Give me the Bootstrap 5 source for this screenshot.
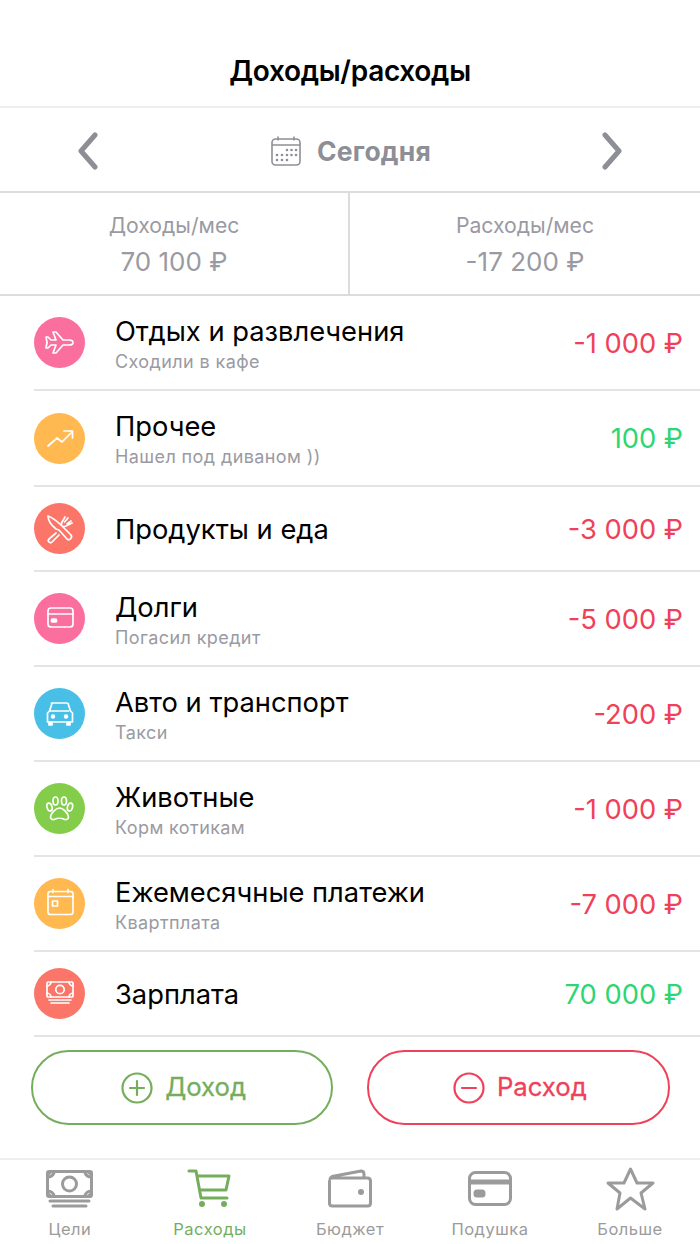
<!DOCTYPE html>
<html lang="ru"><head><meta charset="utf-8"><title>Доходы/расходы</title>
<link href="https://cdn.jsdelivr.net/npm/bootstrap@5.3.0/dist/css/bootstrap.min.css" rel="stylesheet">
<style>
html,body{height:1244px;overflow:hidden;background:#fff}
body{font-family:Inter,"Noto Sans",sans-serif;color:#000;width:700px}
.app{height:1244px}
.topbar{height:108px;padding-top:49px;border-bottom:2px solid #eee;font-size:28px;font-weight:600;line-height:44px;letter-spacing:-.3px}
.datebar{height:85px;border-bottom:2px solid #dcdcde;padding:3px 77px 0;color:#8e8e96}
.dategroup{gap:16px;margin-left:2px}
.datetext{font-size:26.5px;font-weight:700;line-height:1;letter-spacing:.2px}
.stats{height:103px;border-bottom:2px solid #dcdcde;color:#9a9aa2}
.statcell{flex:0 0 50%;padding-top:19px;text-align:center}
.statcell:first-child{border-right:2px solid #dcdcde}
.statlabel{font-size:21.2px;line-height:26px}
.statval{font-size:26px;line-height:36px;margin-top:6px}
.txrow{margin-left:34px;padding-right:17px;border-bottom:2px solid #e4e4e6}
.txtall{height:95px}.txshort{height:85px}.txtaller{height:96px}
.disc{width:51px;height:51px;border-radius:50%;flex:none;margin-right:30px}
.disc svg{width:51px;height:51px;fill:none;stroke:#fff;stroke-width:1.7;stroke-linecap:round;stroke-linejoin:round;display:block}
.txbody{padding-top:2px}
.txname{font-size:27.3px;line-height:34px}
.txnote{font-size:18px;line-height:22px;color:#9a9aa2;letter-spacing:.4px;margin-top:2px}
.txamt{font-size:27.3px;line-height:1;padding-top:2px}
.neg{color:#f0405a}.pos{color:#2ed573}
.actions{padding:13px 30.5px 0 31px;gap:34px;height:121px}
.pill{flex:1 1 0;height:75px;border-radius:38px;background:#fff;border:2px solid;font-size:25.7px;font-weight:400;gap:12px;padding-left:9px;-webkit-text-stroke:.3px currentColor}
.pill svg{width:32px;height:32px;fill:none;stroke:currentColor;stroke-width:2.2;stroke-linecap:round}
.pillgreen{border-color:#74ae5c;color:#74ae5c}
.pillred{border-color:#f0405a;color:#f0405a}
.tabs{border-top:2px solid #eee;height:85px}
.tabitem{flex:1 1 0;text-align:center;color:#9b9b9b;padding-top:8px}
.tabitem svg{display:block;margin:0 auto;width:50px;height:48px;fill:none;stroke:#9b9b9b;stroke-width:3;stroke-linejoin:round;stroke-linecap:round;overflow:visible}
.tabitem span{display:block;font-size:16.5px;line-height:20px;margin-top:3px;letter-spacing:.5px}
.tabon{color:#74ae5c}.tabitem.tabon svg{stroke:#74ae5c}
</style></head><body>
<div class="app d-flex flex-column">
<div class="topbar text-center">Доходы/расходы</div>
<div class="datebar d-flex align-items-center justify-content-between">
<svg width="22" height="38" viewBox="0 0 22 38" fill="none" stroke="#8e8e96" stroke-width="5" stroke-linecap="round" stroke-linejoin="round"><path d="M18 3 4 19l14 16"/></svg>
<div class="dategroup d-flex align-items-center">
<svg width="30" height="30" viewBox="0 0 30 30" fill="none" stroke="#8e8e96" stroke-width="1.6"><rect x="1" y="3" width="28" height="26" rx="3.5"/><path d="M1 9h28M7 .5v4M23 .5v4"/><g fill="#8e8e96" stroke="none"><circle cx="16" cy="14" r="1.3"/><circle cx="20.500" cy="14" r="1.3"/><circle cx="25" cy="14" r="1.3"/><circle cx="6" cy="19" r="1.3"/><circle cx="11" cy="19" r="1.3"/><circle cx="16" cy="19" r="1.3"/><circle cx="20.500" cy="19" r="1.3"/><circle cx="25" cy="19" r="1.3"/><circle cx="6" cy="24" r="1.3"/><circle cx="11" cy="24" r="1.3"/><circle cx="16" cy="24" r="1.3"/></g></svg>
<span class="datetext">Сегодня</span></div>
<svg width="22" height="38" viewBox="0 0 22 38" fill="none" stroke="#8e8e96" stroke-width="5" stroke-linecap="round" stroke-linejoin="round"><path d="m4 3 14 16L4 35"/></svg>
</div>
<div class="stats d-flex">
<div class="statcell"><div class="statlabel">Доходы/мес</div><div class="statval">70 100 ₽</div></div>
<div class="statcell"><div class="statlabel">Расходы/мес</div><div class="statval">-17 200 ₽</div></div>
</div>

<div class="txrow txtall d-flex align-items-center">
<div class="disc" style="background:#fb6f9f"><svg viewBox="0 0 51 51"><path d="M39 25.500c0-1.500-2-2.500-4-2.500h-6l-7-8h-3l3 8h-5l-3-3h-2l1 5.500-1 5.500h2l3-3h5l-3 8h3l7-8h6c2 0 4-1 4-2.500z"/></svg></div>
<div class="txbody flex-grow-1"><div class="txname">Отдых и развлечения</div><div class="txnote">Сходили в кафе</div></div>
<div class="txamt neg">-1 000 ₽</div></div>

<div class="txrow txtaller d-flex align-items-center">
<div class="disc" style="background:#ffb950"><svg viewBox="0 0 51 51"><path d="M14 33l9-8 5 4 10-10M30 18h8.500v7"/></svg></div>
<div class="txbody flex-grow-1"><div class="txname">Прочее</div><div class="txnote">Нашел под диваном ))</div></div>
<div class="txamt pos">100 ₽</div></div>

<div class="txrow txshort d-flex align-items-center">
<div class="disc" style="background:#fb7568"><svg viewBox="0 0 51 51"><path d="M14 13c0 5 3 9 8 13l3 1 8 9c2 2 6-1 4-4l-9-9c-4-4-9-8-14-10zM31 14l-3 5c-1 2-1 3 0 4s2 1 4 0l6-3M34 15l-3.500 4M37 18l-4 3M22 30l-7 6c-2 2 1 5 3 3l7-7"/></svg></div>
<div class="txbody flex-grow-1"><div class="txname">Продукты и еда</div></div>
<div class="txamt neg">-3 000 ₽</div></div>

<div class="txrow txtall d-flex align-items-center">
<div class="disc" style="background:#fb6f9f"><svg viewBox="0 0 51 51"><rect x="14" y="15" width="25" height="19" rx="3"/><path d="M14 21h25"/><rect x="17.500" y="26" width="5" height="3" rx="1" fill="#fff"/></svg></div>
<div class="txbody flex-grow-1"><div class="txname">Долги</div><div class="txnote">Погасил кредит</div></div>
<div class="txamt neg">-5 000 ₽</div></div>

<div class="txrow txtall d-flex align-items-center">
<div class="disc" style="background:#47bfe6"><svg viewBox="0 0 51 51"><path d="M18 15h15c1 0 2 1 2 2l2 6 2 2v9H14v-9l2-2 2-6c0-1 1-2 2-2zM16 23h19" transform="translate(-.5 0)"/><path d="M15 34v3h3v-3M33 34v3h3v-3" fill="#fff"/><circle cx="19" cy="28.500" r="1.400" fill="#fff"/><circle cx="32" cy="28.500" r="1.400" fill="#fff"/></svg></div>
<div class="txbody flex-grow-1"><div class="txname">Авто и транспорт</div><div class="txnote">Такси</div></div>
<div class="txamt neg">-200 ₽</div></div>

<div class="txrow txtall d-flex align-items-center">
<div class="disc" style="background:#84cd4b"><svg viewBox="0 0 51 51"><ellipse cx="15.500" cy="24" rx="2.500" ry="4" transform="rotate(-15 15.500 24)"/><ellipse cx="21.500" cy="18" rx="2.500" ry="4"/><ellipse cx="30" cy="18" rx="2.500" ry="4"/><ellipse cx="36" cy="24" rx="2.500" ry="4" transform="rotate(15 36 24)"/><path d="M25.500 25c-4 0-9 6-9 9 0 3 3 3 5 2s6-1 8 0 5 1 5-2c0-3-5-9-9-9z"/></svg></div>
<div class="txbody flex-grow-1"><div class="txname">Животные</div><div class="txnote">Корм котикам</div></div>
<div class="txamt neg">-1 000 ₽</div></div>

<div class="txrow txtall d-flex align-items-center">
<div class="disc" style="background:#ffb950"><svg viewBox="0 0 51 51"><rect x="14" y="13.500" width="25" height="23" rx="2.500"/><path d="M14 18.500h25M19 11.500v3M34 11.500v3M18.500 23h5v5h-5z"/></svg></div>
<div class="txbody flex-grow-1"><div class="txname">Ежемесячные платежи</div><div class="txnote">Квартплата</div></div>
<div class="txamt neg">-7 000 ₽</div></div>

<div class="txrow txshort d-flex align-items-center">
<div class="disc" style="background:#fb7568"><svg viewBox="0 0 51 51"><rect x="13" y="14" width="26" height="15" rx="1"/><circle cx="26" cy="21.500" r="4.200"/><path d="M13 18c2 0 4-2 4-4M39 18c-2 0-4-2-4-4M13 25c2 0 4 2 4 4M39 25c-2 0-4 2-4 4M15 32h22M17 35h18"/></svg></div>
<div class="txbody flex-grow-1"><div class="txname">Зарплата</div></div>
<div class="txamt pos">70 000 ₽</div></div>

<div class="actions d-flex">
<button type="button" class="pill pillgreen d-flex align-items-center justify-content-center"><svg viewBox="0 0 32 32"><circle cx="16" cy="16" r="14.500"/><path d="M16 9v14M9 16h14"/></svg>Доход</button>
<button type="button" class="pill pillred d-flex align-items-center justify-content-center"><svg viewBox="0 0 32 32"><circle cx="16" cy="16" r="14.500"/><path d="M9 16h14"/></svg>Расход</button>
</div>

<div class="tabs d-flex">
<div class="tabitem"><svg viewBox="0 0 50 48"><rect x="2.500" y="3.500" width="44" height="25" rx="1.500"/><circle cx="24.500" cy="16" r="7"/><path d="M2.500 9c3 0 6-2 7-5.500M46.500 9c-3 0-6-2-7-5.500M2.500 23c3 0 6 2 7 5.500M46.500 23c-3 0-6 2-7 5.500M5 33h39M8 38h33"/><path d="M3 4h5l-5 4zM46 4h-5l5 4zM3 28h5l-5-4zM46 28h-5l5-4z" fill="#9b9b9b" stroke="none"/></svg><span>Цели</span></div>
<div class="tabitem tabon"><svg viewBox="0 0 50 48"><path d="M4 3h7l5 27h26M12 8h32l-3 14H15"/><circle cx="17" cy="36" r="1.500" fill="#74ae5c"/><circle cx="39" cy="36" r="1.500" fill="#74ae5c"/></svg><span>Расходы</span></div>
<div class="tabitem"><svg viewBox="0 0 50 48"><path d="M4.500 13v22c0 2 1 3 3 3h35c2 0 3-1 3-3V13c0-2-1-3-3-3H6.500M5 11c0-1 1-2 2-2.500L36 3c2 0 3 1 3 3v4"/><circle cx="36" cy="24" r="1.500" fill="#9b9b9b"/></svg><span>Бюджет</span></div>
<div class="tabitem"><svg viewBox="0 0 50 48"><rect x="4.500" y="4.500" width="41" height="32" rx="6"/><path d="M4.500 14h41" stroke-width="5" stroke-linecap="butt"/><rect x="10" y="23" width="9" height="5" rx="2" fill="#9b9b9b"/></svg><span>Подушка</span></div>
<div class="tabitem"><svg viewBox="0 0 50 48"><path d="M25.500 1 32 15h16L36 25l4 16-14.500-11L12 41l3-16L3 15h16z"/></svg><span>Больше</span></div>
</div>
</div>
</body></html>
